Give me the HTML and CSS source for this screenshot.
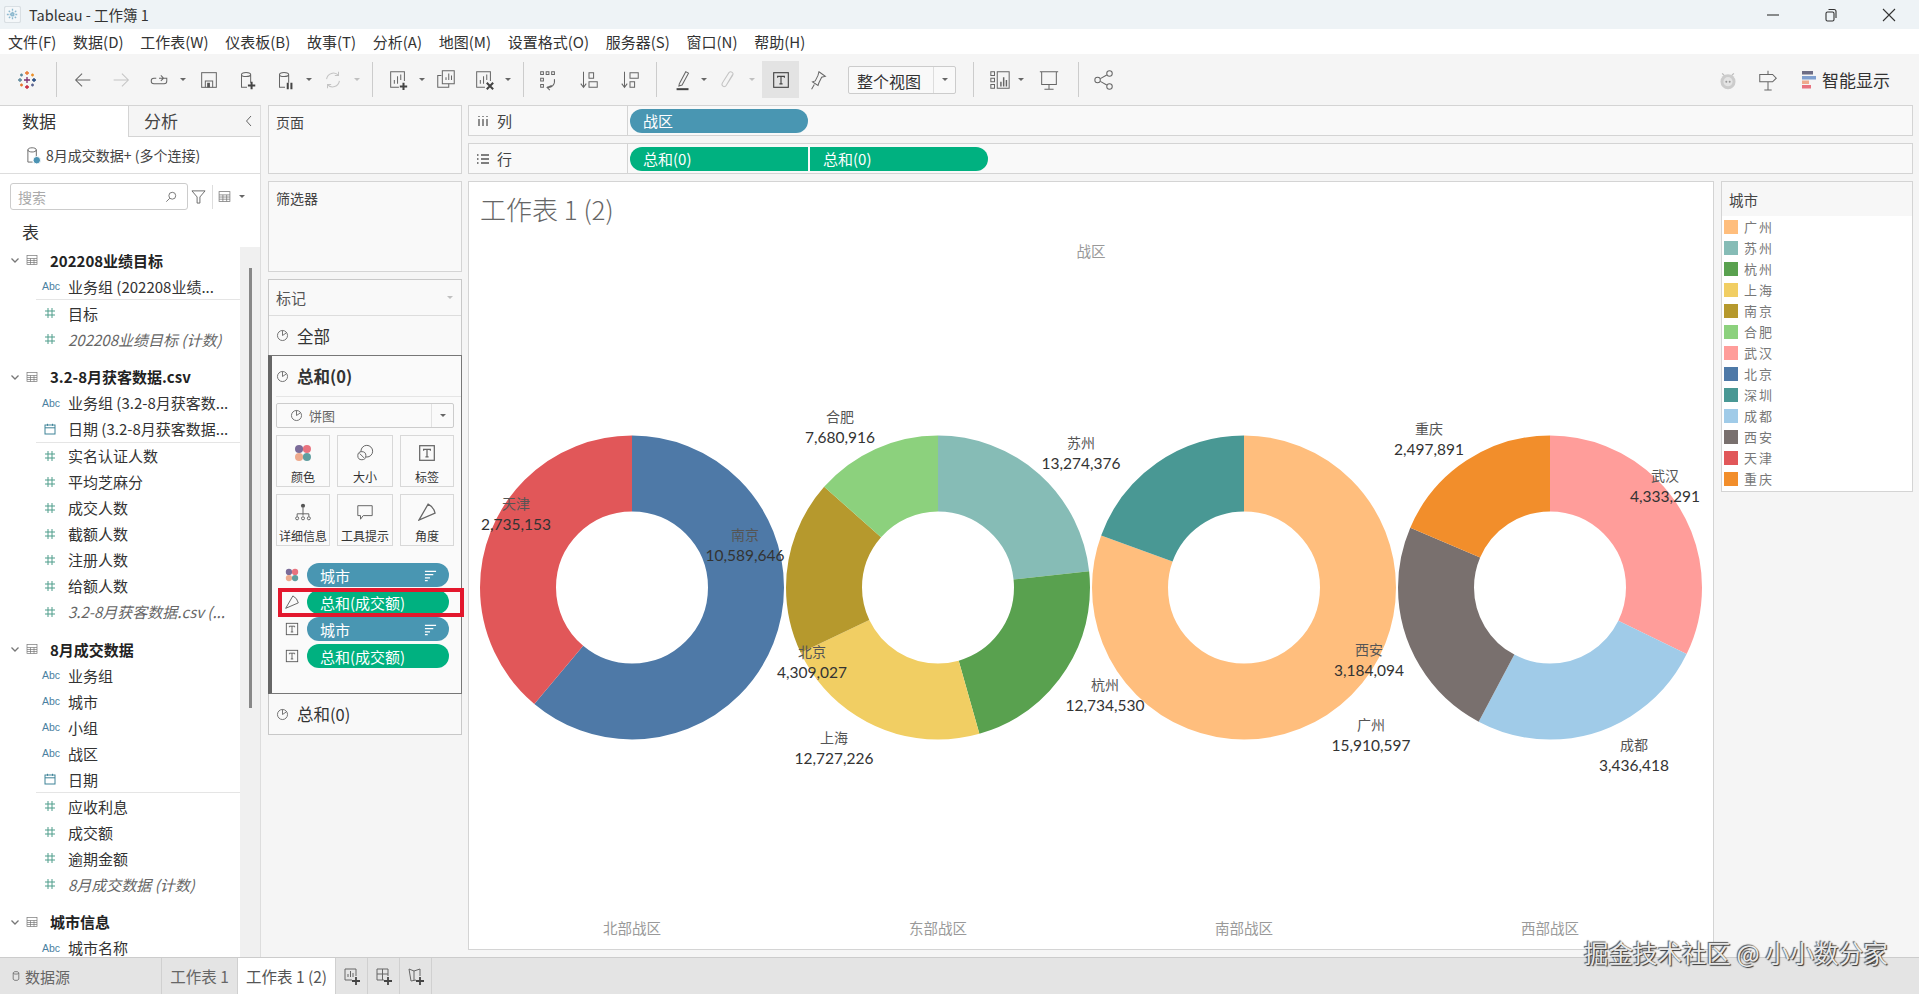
FILE: index.html
```html
<!DOCTYPE html>
<html lang="zh-CN">
<head>
    <meta charset="UTF-8">
    <title>Tableau - 工作簿 1</title>
    <link rel="stylesheet" href="styles.css">
</head>
<body>
    <svg class="sprites" width="0" height="0">
        <symbol id="pie" viewBox="0 0 16 16"><circle cx="8" cy="8" r="6.2"/><path d="M8 8V1.8M8 8l5-3.4"/></symbol>
        <symbol id="tbox" viewBox="0 0 16 16"><rect x="1.5" y="1.5" width="13" height="13"/><path d="M5 6V4.8h6V6M8 4.8v6.6M6.6 11.4h2.8"/></symbol>
        <symbol id="dots" viewBox="0 0 16 16"><circle class="d1" cx="4.5" cy="4.5" r="3.6"/><circle class="d2" cx="11.5" cy="4.5" r="3.6"/><circle class="d3" cx="4.5" cy="11.5" r="3.6"/><circle class="d4" cx="11.5" cy="11.5" r="3.6"/></symbol>
        <symbol id="angle" viewBox="0 0 16 16"><path d="M.8 15.2L9 1q5 2.500 6.200 8z"/></symbol>
        <symbol id="sort" viewBox="0 0 14 14"><path d="M1 2.5h12M1 6h9M1 9.5h5.5M1 12.5h3"/></symbol>
        <symbol id="table" viewBox="0 0 12 12"><rect x="1" y="1.5" width="10" height="9"/><path d="M1 4.5h10M1 6.5h10M1 8.5h10M4.5 4.5v6M8 4.5v6"/></symbol>
        <symbol id="chev" viewBox="0 0 10 10"><path d="M1.5 3.5L5 7l3.5-3.5"/></symbol>
        <symbol id="hash" viewBox="0 0 12 12"><path d="M4 1v10M8 1v10M1 4h10M1 8h10"/></symbol>
        <symbol id="date" viewBox="0 0 12 12"><rect x="1" y="2" width="10" height="9"/><path d="M1 4.8h10M3.5 .8v2M8.5 .8v2"/></symbol>
        <symbol id="can" viewBox="0 0 24 24"><path d="M6 6c0-3 10-3 10 0v9M6 6c0 3 10 3 10 0M6 6v14h6"/></symbol>
    </svg>

    <div class="app">
        <div class="titlebar">
            <svg class="app-icon" viewBox="0 0 18 18"><rect x="0.5" y="0.5" width="17" height="17" rx="2" fill="#f4f7f9" stroke="#d9dfe3"/><path d="M9 3v12M3 9h12M5 5l8 8M13 5l-8 8" stroke="#8db9cf" stroke-width="1.4" stroke-dasharray="2 1"/></svg>
            <span class="app-name">Tableau - 工作簿 1</span>
            <div class="win-buttons">
                <span class="win-btn"><svg viewBox="0 0 14 14"><path d="M1 7h12"/></svg></span>
                <span class="win-btn"><svg viewBox="0 0 14 14"><rect x="2" y="4" width="8" height="9" rx="1.5"/><path d="M4.5 1.5H10a2 2 0 0 1 2 2V10"/></svg></span>
                <span class="win-btn"><svg viewBox="0 0 14 14"><path d="M1 1l12 12M13 1L1 13"/></svg></span>
            </div>
        </div>

        <div class="menubar">
            <span>文件(F)</span><span>数据(D)</span><span>工作表(W)</span><span>仪表板(B)</span><span>故事(T)</span><span>分析(A)</span><span>地图(M)</span><span>设置格式(O)</span><span>服务器(S)</span><span>窗口(N)</span><span>帮助(H)</span>
        </div>

        <div class="toolbar">
            <div class="tool-group logo-group">
                <svg class="logo" viewBox="0 0 20 20" fill="none" stroke-width="1.4">
                    <path d="M10 1v4M8 3h4" stroke="#e8762c"/><path d="M10 15v4M8 17h4" stroke="#c72037"/>
                    <path d="M1 10h4M3 8v4" stroke="#5b879b"/><path d="M15 10h4M17 8v4" stroke="#1f447b"/>
                    <path d="M10 7v6M7 10h6" stroke="#7a2e6e"/>
                    <path d="M4.5 3.5v3M3 5h3" stroke="#59879b"/><path d="M15.5 3.5v3M14 5h3" stroke="#eb912b"/>
                    <path d="M4.5 13.5v3M3 15h3" stroke="#e8762c"/><path d="M15.5 13.5v3M14 15h3" stroke="#5b6591"/>
                </svg>
            </div>
            <div class="tool-group group-file">
                <span class="tool"><svg viewBox="0 0 24 24"><path d="M20 12H5M11 5l-7 7 7 7"/></svg></span>
                <span class="tool off"><svg viewBox="0 0 24 24"><path d="M4 12h15M13 5l7 7-7 7"/></svg></span>
                <span class="tool"><svg viewBox="0 0 24 24"><path d="M9 10H6.500a3 3 0 0 0 0 6h11a3 3 0 0 0 3-3v-3H12M14 7l3 3-3 3"/></svg></span>
                <span class="caret"></span>
                <span class="tool push"><svg viewBox="0 0 24 24"><rect x="4" y="4" width="16" height="16"/><path d="M8 20v-7h8v7"/><rect class="solid" x="10" y="15" width="3" height="5"/></svg></span>
                <span class="tool"><svg viewBox="0 0 24 24"><use href="#can"/><path class="thick" d="M13 18h8M17 14v8"/></svg></span>
                <span class="tool"><svg viewBox="0 0 24 24"><use href="#can"/><path class="thick" d="M15 15v7M19 15v7"/></svg></span>
                <span class="caret"></span>
                <span class="tool off"><svg viewBox="0 0 24 24"><path d="M5 11a7.500 7.500 0 0 1 13-4M19 13a7.500 7.500 0 0 1-13 4M18 3v4h-4M6 21v-4h4"/></svg></span>
                <span class="caret off"></span>
            </div>
            <div class="tool-group group-sheet">
                <span class="tool"><svg viewBox="0 0 24 24"><path d="M13 20H4V3h15v10M8 16v-4M11.500 16V8M15 12V6"/><path class="thick" d="M14 19h8M18 15v8"/></svg></span>
                <span class="caret"></span>
                <span class="tool"><svg viewBox="0 0 24 24"><path d="M7 7H3v13h12v-4"/><path d="M8 2h13v14H8zM12 12V9M15 12V5M18 12V7"/></svg></span>
                <span class="tool"><svg viewBox="0 0 24 24"><path d="M13 20H4V3h15v10M8 16v-4M11.500 16V8M15 12V6"/><path class="thick" d="M15 15l7 7M22 15l-7 7"/></svg></span>
                <span class="caret"></span>
            </div>
            <div class="tool-group group-sort">
                <span class="tool"><svg viewBox="0 0 24 24"><path d="M4 3h3v3H4zM10 3h3v3h-3zM16 3h3v3h-3zM4 10h3v3H4zM4 17h3v3H4zM11 20c5 1 9-3 8-9M16 18l-5 2 3 3"/></svg></span>
                <span class="tool"><svg viewBox="0 0 24 24"><path d="M6 3v16M3 16l3 4 3-4M12 4h5v6h-5zM12 14h9v6h-9z"/></svg></span>
                <span class="tool"><svg viewBox="0 0 24 24"><path d="M6 3v16M3 16l3 4 3-4M12 4h9v6h-9zM12 14h5v6h-5z"/></svg></span>
            </div>
            <div class="tool-group group-mark">
                <span class="tool"><svg viewBox="0 0 24 24"><path d="M8 16l7-13 3 1.500-7 13-3.500 1z"/><path class="thick" d="M5 22h13"/></svg></span>
                <span class="caret tuck"></span>
                <span class="tool off"><svg viewBox="0 0 24 24"><path d="M17 6l-7 12c-2 3-6 0-4-3l7-11c2-2 6 0 4 3l-7 11"/></svg></span>
                <span class="caret off"></span>
                <span class="tool selected"><svg class="t-icon" viewBox="0 0 16 16"><use href="#tbox"/></svg></span>
                <span class="tool"><svg viewBox="0 0 24 24"><path d="M13 3l7 5-4 1-3 6-1 3-6-4 3-1 3-6zM8 17l-3 5"/></svg></span>
                <div class="fit-select"><span class="fit-label">整个视图</span><span class="fit-arrow"><i class="caret"></i></span></div>
            </div>
            <div class="tool-group group-show">
                <span class="tool"><svg viewBox="0 0 24 24"><path d="M2 3h4v4H2zM2 10h4v4H2zM2 17h4v4H2zM9 3h13v18H9z"/><path class="bars" d="M13 19v-5M16 19V9M19 19v-7"/></svg></span>
                <span class="caret tuck"></span>
                <span class="tool present"><svg viewBox="0 0 24 24"><path d="M2 3h20M4 3v14h16V3M12 17v5M7 22h10"/></svg></span>
            </div>
            <div class="tool-group group-share">
                <span class="tool"><svg viewBox="0 0 24 24"><circle cx="5" cy="12" r="3"/><circle cx="18" cy="5" r="3"/><circle cx="18" cy="19" r="3"/><path d="M8 10.500l7-4M8 13.500l7 4"/></svg></span>
            </div>
            <div class="toolbar-right">
                <svg class="bot" viewBox="0 0 24 24"><path d="M5 4l3 3M19 4l-3 3" stroke="#bbb" fill="none" stroke-width="1.500"/><circle cx="12" cy="14" r="9" fill="#ccc"/><circle cx="12" cy="14" r="5.500" fill="#e4e4e4"/><circle cx="10" cy="14" r="1.200" fill="#999"/><circle cx="14" cy="14" r="1.200" fill="#999"/></svg>
                <svg class="sign" viewBox="0 0 24 24"><path d="M12 2v4M3 6h14l4 4-4 4H3zM12 14v9M8 23h8"/></svg>
                <div class="show-me">
                    <svg viewBox="0 0 14 18"><rect width="11" height="3.500" fill="#6d6d85"/><rect y="5" width="14" height="3.500" fill="#7f9fcf"/><rect y="9.500" width="7" height="3.500" fill="#eeaa8d"/><rect y="14" width="9" height="3.500" fill="#e8737f"/></svg>
                    <span>智能显示</span>
                </div>
            </div>
        </div>

        <div class="workspace">
            <aside class="data-pane">
                <div class="pane-tabs">
                    <span class="pane-tab active">数据</span>
                    <span class="pane-tab">分析<svg class="collapse" viewBox="0 0 10 14"><path d="M7 2L2.500 7 7 12"/></svg></span>
                </div>
                <div class="source-row">
                    <svg viewBox="0 0 16 20"><path d="M2 4c0-3 9-3 9 0v8M2 4c0 3 9 3 9 0M2 4v13h5"/><circle class="badge" cx="11.500" cy="15" r="4"/></svg>
                    <span>8月成交数据+ (多个连接)</span>
                </div>
                <div class="search-row">
                    <div class="search-box"><span>搜索</span><svg viewBox="0 0 14 14"><circle cx="8.500" cy="5.500" r="4"/><path d="M5.500 8.500L1.500 12.500"/></svg></div>
                    <svg class="funnel" viewBox="0 0 16 16"><path d="M1 2h14L9.500 8.500V15h-3V8.500z"/></svg>
                    <span class="search-sep"></span>
                    <svg class="view-list" viewBox="0 0 12 12"><use href="#table"/></svg>
                    <span class="caret"></span>
                </div>
                <div class="tables-title">表</div>
                <div class="tree-wrap">
                    <div class="tree">
                        <div class="tree-head"><svg class="chev"><use href="#chev"/></svg><svg class="tbl"><use href="#table"/></svg>202208业绩目标</div>
                        <div class="field"><b class="abc">Abc</b>业务组 (202208业绩...</div>
                        <div class="field-sep"></div>
                        <div class="field"><svg class="hash"><use href="#hash"/></svg>目标</div>
                        <div class="field calc"><svg class="hash"><use href="#hash"/></svg>202208业绩目标 (计数)</div>

                        <div class="tree-head"><svg class="chev"><use href="#chev"/></svg><svg class="tbl"><use href="#table"/></svg>3.2-8月获客数据.csv</div>
                        <div class="field"><b class="abc">Abc</b>业务组 (3.2-8月获客数...</div>
                        <div class="field"><svg class="cal"><use href="#date"/></svg>日期 (3.2-8月获客数据...</div>
                        <div class="field-sep"></div>
                        <div class="field"><svg class="hash"><use href="#hash"/></svg>实名认证人数</div>
                        <div class="field"><svg class="hash"><use href="#hash"/></svg>平均芝麻分</div>
                        <div class="field"><svg class="hash"><use href="#hash"/></svg>成交人数</div>
                        <div class="field"><svg class="hash"><use href="#hash"/></svg>截额人数</div>
                        <div class="field"><svg class="hash"><use href="#hash"/></svg>注册人数</div>
                        <div class="field"><svg class="hash"><use href="#hash"/></svg>给额人数</div>
                        <div class="field calc"><svg class="hash"><use href="#hash"/></svg>3.2-8月获客数据.csv (...</div>

                        <div class="tree-head"><svg class="chev"><use href="#chev"/></svg><svg class="tbl"><use href="#table"/></svg>8月成交数据</div>
                        <div class="field"><b class="abc">Abc</b>业务组</div>
                        <div class="field"><b class="abc">Abc</b>城市</div>
                        <div class="field"><b class="abc">Abc</b>小组</div>
                        <div class="field"><b class="abc">Abc</b>战区</div>
                        <div class="field"><svg class="cal"><use href="#date"/></svg>日期</div>
                        <div class="field-sep"></div>
                        <div class="field"><svg class="hash"><use href="#hash"/></svg>应收利息</div>
                        <div class="field"><svg class="hash"><use href="#hash"/></svg>成交额</div>
                        <div class="field"><svg class="hash"><use href="#hash"/></svg>逾期金额</div>
                        <div class="field calc"><svg class="hash"><use href="#hash"/></svg>8月成交数据 (计数)</div>

                        <div class="tree-head"><svg class="chev"><use href="#chev"/></svg><svg class="tbl"><use href="#table"/></svg>城市信息</div>
                        <div class="field"><b class="abc">Abc</b>城市名称</div>
                    </div>
                    <div class="scroll-track"><div class="scroll-thumb"></div></div>
                </div>
            </aside>

            <div class="side-cards">
                <section class="card pages-card">页面</section>
                <section class="card filters-card">筛选器</section>
                <section class="marks-card">
                    <div class="marks-head">标记<span class="caret off"></span></div>
                    <div class="marks-row"><svg class="pie"><use href="#pie"/></svg>全部</div>
                    <div class="marks-active">
                        <div class="marks-row strong"><svg class="pie"><use href="#pie"/></svg>总和(0)</div>
                        <div class="mark-type">
                            <svg class="pie"><use href="#pie"/></svg><span>饼图</span><i class="type-arrow"><b class="caret"></b></i>
                        </div>
                        <div class="mark-buttons">
                            <div class="mark-btn"><svg><use href="#dots"/></svg>颜色</div>
                            <div class="mark-btn"><svg viewBox="0 0 20 20"><circle cx="12" cy="8" r="6.500"/><circle class="fill-white" cx="6.500" cy="13" r="4.500"/><path d="M4 10.500l5 5"/></svg>大小</div>
                            <div class="mark-btn"><svg viewBox="0 0 16 16"><use href="#tbox"/></svg>标签</div>
                            <div class="mark-btn"><svg viewBox="0 0 20 20"><circle class="solid" cx="10" cy="3" r="2.300"/><circle cx="3.500" cy="17" r="1.700"/><circle cx="10" cy="17" r="1.700"/><circle cx="16.500" cy="17" r="1.700"/><path d="M10 5v9M3.500 15v-3h13v3"/></svg>详细信息</div>
                            <div class="mark-btn"><svg viewBox="0 0 20 20"><path d="M2 3h16v11H8l-3 4v-4H2z"/></svg>工具提示</div>
                            <div class="mark-btn"><svg viewBox="0 0 16 16"><use href="#angle"/></svg>角度</div>
                        </div>
                        <div class="encodings">
                            <div class="encoding"><svg class="enc-icon"><use href="#dots"/></svg><div class="pill dim">城市<svg class="sort"><use href="#sort"/></svg></div></div>
                            <div class="encoding">
                                <svg class="enc-icon"><use href="#angle"/></svg><div class="pill measure">总和(成交额)</div>
                                <div class="red-box"></div>
                            </div>
                            <div class="encoding"><svg class="enc-icon"><use href="#tbox"/></svg><div class="pill dim">城市<svg class="sort"><use href="#sort"/></svg></div></div>
                            <div class="encoding"><svg class="enc-icon"><use href="#tbox"/></svg><div class="pill measure">总和(成交额)</div></div>
                        </div>
                    </div>
                    <div class="marks-row last"><svg class="pie"><use href="#pie"/></svg>总和(0)</div>
                </section>
            </div>

            <div class="sheet-area">
                <div class="shelf">
                    <div class="shelf-label"><svg viewBox="0 0 12 12"><path d="M2 4v7M6 4v7M10 4v7M2 1v1M6 1v1M10 1v1"/></svg>列</div>
                    <div class="shelf-pills"><div class="shelf-pill dim round-right">战区</div></div>
                </div>
                <div class="shelf">
                    <div class="shelf-label"><svg viewBox="0 0 12 12"><path d="M4 2h8M4 6h8M4 10h8M0 2h1.500M0 6h1.500M0 10h1.500"/></svg>行</div>
                    <div class="shelf-pills">
                        <div class="shelf-pill measure round-left">总和(0)</div>
                        <div class="shelf-pill measure round-right">总和(0)</div>
                    </div>
                </div>
                <div class="view-row">
                    <div class="view">
                        <h2 class="view-title">工作表 1 (2)</h2>
                        <svg class="chart" viewBox="469 182 1244 767">
                            <text class="axis" x="1091" y="252">战区</text>

                            <!-- north -->
                            <g transform="translate(632 587.500) rotate(-90)">
                                <circle class="slice" r="114" pathLength="360" stroke="#4e79a7" stroke-dasharray="220 360"/>
                                <circle class="slice" r="114" pathLength="360" stroke="#e15759" stroke-dasharray="140 360" stroke-dashoffset="-220"/>
                            </g>
                            <!-- east -->
                            <g transform="translate(938 587.500) rotate(-90)">
                                <circle class="slice" r="114" pathLength="360" stroke="#86bcb6" stroke-dasharray="83.800 360"/>
                                <circle class="slice" r="114" pathLength="360" stroke="#59a14f" stroke-dasharray="80.400 360" stroke-dashoffset="-83.800"/>
                                <circle class="slice" r="114" pathLength="360" stroke="#f1ce63" stroke-dasharray="80.400 360" stroke-dashoffset="-164.200"/>
                                <circle class="slice" r="114" pathLength="360" stroke="#b6992d" stroke-dasharray="66.900 360" stroke-dashoffset="-244.600"/>
                                <circle class="slice" r="114" pathLength="360" stroke="#8cd17d" stroke-dasharray="48.500 360" stroke-dashoffset="-311.500"/>
                            </g>
                            <!-- south -->
                            <g transform="translate(1244 587.500) rotate(-90)">
                                <circle class="slice" r="114" pathLength="360" stroke="#ffbe7d" stroke-dasharray="290 360"/>
                                <circle class="slice" r="114" pathLength="360" stroke="#499894" stroke-dasharray="70 360" stroke-dashoffset="-290"/>
                            </g>
                            <!-- west -->
                            <g transform="translate(1550 587.500) rotate(-90)">
                                <circle class="slice" r="114" pathLength="360" stroke="#ff9d9a" stroke-dasharray="116 360"/>
                                <circle class="slice" r="114" pathLength="360" stroke="#a0cbe8" stroke-dasharray="92 360" stroke-dashoffset="-116"/>
                                <circle class="slice" r="114" pathLength="360" stroke="#79706e" stroke-dasharray="85.200 360" stroke-dashoffset="-208"/>
                                <circle class="slice" r="114" pathLength="360" stroke="#f28e2b" stroke-dasharray="66.800 360" stroke-dashoffset="-293.200"/>
                            </g>

                            <text class="name" x="516" y="504">天津</text><text class="value" x="516" y="525">2,735,153</text>
                            <text class="name" x="745" y="535">南京</text><text class="value" x="745" y="556">10,589,646</text>
                            <text class="name" x="840" y="417">合肥</text><text class="value" x="840" y="438">7,680,916</text>
                            <text class="name" x="1081" y="443">苏州</text><text class="value" x="1081" y="464">13,274,376</text>
                            <text class="name" x="812" y="652">北京</text><text class="value" x="812" y="673">4,309,027</text>
                            <text class="name" x="834" y="738">上海</text><text class="value" x="834" y="759">12,727,226</text>
                            <text class="name" x="1105" y="685">杭州</text><text class="value" x="1105" y="706">12,734,530</text>
                            <text class="name" x="1369" y="650">西安</text><text class="value" x="1369" y="671">3,184,094</text>
                            <text class="name" x="1371" y="725">广州</text><text class="value" x="1371" y="746">15,910,597</text>
                            <text class="name" x="1429" y="429">重庆</text><text class="value" x="1429" y="450">2,497,891</text>
                            <text class="name" x="1665" y="476">武汉</text><text class="value" x="1665" y="497">4,333,291</text>
                            <text class="name" x="1634" y="745">成都</text><text class="value" x="1634" y="766">3,436,418</text>

                            <text class="axis" x="632" y="929">北部战区</text>
                            <text class="axis" x="938" y="929">东部战区</text>
                            <text class="axis" x="1244" y="929">南部战区</text>
                            <text class="axis" x="1550" y="929">西部战区</text>
                        </svg>
                    </div>
                    <aside class="legend">
                        <div class="legend-title">城市</div>
                        <div class="legend-list">
                            <div class="legend-item"><i class="c-guangzhou"></i>广州</div>
                            <div class="legend-item"><i class="c-suzhou"></i>苏州</div>
                            <div class="legend-item"><i class="c-hangzhou"></i>杭州</div>
                            <div class="legend-item"><i class="c-shanghai"></i>上海</div>
                            <div class="legend-item"><i class="c-nanjing"></i>南京</div>
                            <div class="legend-item"><i class="c-hefei"></i>合肥</div>
                            <div class="legend-item"><i class="c-wuhan"></i>武汉</div>
                            <div class="legend-item"><i class="c-beijing"></i>北京</div>
                            <div class="legend-item"><i class="c-shenzhen"></i>深圳</div>
                            <div class="legend-item"><i class="c-chengdu"></i>成都</div>
                            <div class="legend-item"><i class="c-xian"></i>西安</div>
                            <div class="legend-item"><i class="c-tianjin"></i>天津</div>
                            <div class="legend-item"><i class="c-chongqing"></i>重庆</div>
                        </div>
                    </aside>
                </div>
            </div>
        </div>

        <div class="tabbar">
            <div class="tab source-tab"><svg viewBox="0 0 10 14"><path d="M1.500 3c0-2 7-2 7 0v8c0 2-7 2-7 0zM1.500 3.500c0 1.500 7 1.500 7 0"/></svg>数据源</div>
            <div class="tab sheet-tab">工作表 1</div>
            <div class="tab sheet-tab current">工作表 1 (2)</div>
            <div class="tab add-tab"><svg viewBox="0 0 18 18"><path d="M9 13H2V2h11v7M5 10V7M7.500 10V4M10 10V6"/><path class="thick" d="M9 14h8M13 10v8"/></svg></div>
            <div class="tab add-tab"><svg viewBox="0 0 18 18"><path d="M9 13H2V2h11v7M2 7h11M7.500 2v11"/><path class="thick" d="M9 14h8M13 10v8"/></svg></div>
            <div class="tab add-tab"><svg viewBox="0 0 18 18"><path d="M9 13l-5 1-2-12 5 2 6-2v7M7 4v9"/><path class="thick" d="M9 14h8M13 10v8"/></svg></div>
        </div>

        <div class="watermark">掘金技术社区 @ 小小数分家</div>
    </div>
</body>
</html>
```

FILE: styles.css
```css
* {
    box-sizing: border-box;
}

html, body {
    margin: 0;
    padding: 0;
    height: 100%;
    overflow: hidden;
}

body {
    font-family: "Noto Sans CJK SC", "Noto Sans", sans-serif;
    font-size: 15px;
    color: #333;
    background-color: #f5f5f5;
}

.sprites {
    position: absolute;
}

svg {
    fill: none;
    stroke: #666;
    stroke-width: 1.3;
}

.app {
    position: relative;
    display: flex;
    flex-direction: column;
    height: 100vh;
}

/* window chrome */
.titlebar {
    display: flex;
    align-items: center;
    height: 29px;
    flex: none;
    padding-left: 4px;
    background-color: #eef3f6;
}

.app-icon {
    width: 17px;
    height: 17px;
    stroke: none;
}

.app-name {
    margin-left: 8px;
    font-size: 14.500px;
    color: #333;
    line-height: 20px;
}

.win-buttons {
    display: flex;
    margin-left: auto;
    margin-right: 1px;
}

.win-btn {
    display: flex;
    justify-content: center;
    align-items: center;
    width: 58px;
    height: 29px;
}

.win-btn svg {
    width: 14px;
    height: 14px;
    stroke: #333;
    stroke-width: 1.1;
}

.menubar {
    display: flex;
    gap: 16.700px;
    align-items: center;
    flex: none;
    height: 25px;
    padding-left: 8px;
    background-color: #fff;
    font-size: 15px;
    line-height: 20px;
    color: #333;
}

/* toolbar */
.toolbar {
    display: flex;
    align-items: center;
    flex: none;
    height: 51px;
    background-color: #f5f5f5;
}

.tool-group {
    display: flex;
    align-items: center;
    height: 35px;
    border-right: 1px solid #ccc;
}

.logo-group {
    width: 57px;
    padding-left: 17px;
}

.logo {
    width: 20px;
    height: 20px;
}

.group-file {
    padding: 0 10px 0 7px;
}

.group-sheet {
    padding: 0 10px 0 6px;
}

.group-sort {
    gap: 3px;
    padding: 0 7px 0 5px;
}

.group-mark {
    padding: 0 17px 0 7px;
}

.group-show {
    padding: 0 10px 0 7px;
}

.group-share {
    padding-left: 6px;
    border-right: 0;
}

.tool {
    display: flex;
    justify-content: center;
    align-items: center;
    flex: none;
    width: 38px;
    height: 37px;
}

.tool svg {
    width: 22px;
    height: 22px;
    stroke-width: 1.1;
}

.tool.off svg {
    stroke: #c4c4c4;
}

.tool.push {
    margin-left: 2px;
}

.tool.present {
    margin-left: 4px;
}

.tool.selected {
    width: 37px;
    margin-left: 5px;
    background-color: #e3e3e3;
}

.tool svg.t-icon {
    width: 18px;
    height: 18px;
    stroke: #444;
    stroke-width: 1;
}

.thick {
    stroke: #444;
    stroke-width: 2.2;
}

.bars {
    stroke: #666;
    stroke-width: 1.6;
}

.solid {
    fill: #555;
    stroke: none;
}

.caret {
    display: inline-block;
    flex: none;
    width: 0;
    height: 0;
    margin: 0 2px;
    border-top: 3.500px solid #666;
    border-left: 3px solid transparent;
    border-right: 3px solid transparent;
}

.caret.off {
    border-top-color: #c0c0c0;
}

.caret.tuck {
    margin-left: -1px;
}

.fit-select {
    display: flex;
    width: 108px;
    height: 28px;
    margin-left: 11px;
    background-color: #f9f9f9;
    border: 1px solid #ccc;
    border-radius: 2px;
}

.fit-label {
    flex: 1;
    padding-left: 8px;
    font-size: 16px;
    line-height: 28px;
    color: #333;
}

.fit-arrow {
    display: flex;
    justify-content: center;
    align-items: center;
    width: 22px;
    border-left: 1px solid #ddd;
}

.toolbar-right {
    display: flex;
    align-items: center;
    margin-left: auto;
    padding-right: 29px;
}

.bot {
    width: 20px;
    height: 22px;
    stroke: none;
}

.sign {
    width: 22px;
    height: 24px;
    margin-left: 19px;
    stroke-width: 1.1;
}

.show-me {
    display: flex;
    align-items: center;
    gap: 6px;
    margin-left: 23px;
    font-size: 17px;
    color: #333;
}

.show-me svg {
    width: 14px;
    height: 18px;
    stroke: none;
}

/* main area */
.workspace {
    display: flex;
    flex: 1;
    min-height: 0;
}

.data-pane {
    display: flex;
    flex-direction: column;
    flex: none;
    width: 261px;
    background-color: #fff;
    border-top: 1px solid #d4d4d4;
    border-right: 1px solid #ddd;
}

.pane-tabs {
    display: flex;
    flex: none;
    height: 31px;
    font-size: 17px;
    line-height: 30px;
}

.pane-tab {
    position: relative;
    flex: 1;
    padding-left: 15px;
    color: #444;
    background-color: #f5f5f5;
    border-bottom: 1px solid #d4d4d4;
}

.pane-tab.active {
    flex: none;
    width: 129px;
    padding-left: 22px;
    color: #333;
    background-color: #fff;
    border-bottom: 0;
    border-right: 1px solid #d4d4d4;
}

.collapse {
    position: absolute;
    top: 8px;
    right: 6px;
    width: 10px;
    height: 14px;
    stroke-width: 1;
}

.source-row {
    display: flex;
    align-items: center;
    flex: none;
    gap: 5px;
    height: 37px;
    padding-left: 26px;
    font-size: 14px;
    color: #444;
    border-bottom: 1px solid #ddd;
}

.source-row svg {
    width: 15px;
    height: 19px;
    stroke-width: 1;
}

.badge {
    fill: #4b93b3;
    stroke: #fff;
}

.search-row {
    display: flex;
    align-items: center;
    flex: none;
    height: 27px;
    margin-top: 9px;
    padding-left: 10px;
}

.search-box {
    display: flex;
    justify-content: space-between;
    align-items: center;
    width: 178px;
    height: 27px;
    padding: 0 10px 0 7px;
    font-size: 14px;
    color: #aaa;
    background-color: #fff;
    border: 1px solid #ccc;
    border-radius: 3px;
}

.search-box svg {
    width: 12px;
    height: 12px;
    stroke-width: 1;
}

.funnel {
    width: 15px;
    height: 15px;
    margin-left: 3px;
    stroke-width: 1;
}

.search-sep {
    width: 1px;
    height: 24px;
    margin-left: 6px;
    background-color: #ddd;
}

.view-list {
    width: 13px;
    height: 13px;
    margin: 0 6px 0 5px;
    stroke: #777;
    stroke-width: 0.7;
}

.tables-title {
    flex: none;
    height: 37px;
    padding-left: 22px;
    font-size: 17px;
    line-height: 44px;
    color: #333;
}

.tree-wrap {
    display: flex;
    flex: 1;
    min-height: 0;
}

.tree {
    flex: 1;
    overflow: hidden;
}

.tree-head {
    display: flex;
    align-items: center;
    height: 26px;
    margin-top: 11.500px;
    font-weight: 700;
    color: #222;
}

.tree-head:first-child {
    margin-top: 0;
}

.chev {
    width: 10px;
    height: 10px;
    margin-left: 10px;
    stroke: #777;
}

.tbl {
    width: 12px;
    height: 12px;
    margin: 0 12px 0 6px;
    stroke: #777;
    stroke-width: 0.7;
}

.field {
    display: flex;
    align-items: center;
    height: 26px;
    padding-left: 42px;
    white-space: nowrap;
}

.field.calc {
    font-style: italic;
    color: #666;
}

.abc {
    width: 26px;
    font-family: "Liberation Sans", sans-serif;
    font-size: 10.500px;
    font-weight: 400;
    font-style: normal;
    color: #4a7f9f;
}

.hash,
.cal {
    flex: none;
    width: 12px;
    height: 12px;
    margin: 0 12px 0 2px;
}

.hash {
    stroke: #4e9d8b;
    stroke-width: 1;
}

.cal {
    stroke: #3f8398;
    stroke-width: 1;
}

.field-sep {
    height: 1px;
    margin-left: 36px;
    background-color: #e5e5e5;
}

.scroll-track {
    flex: none;
    width: 20px;
    padding: 21px 0 0 9px;
    background-color: #f0f0f0;
}

.scroll-thumb {
    width: 3px;
    height: 440px;
    background-color: #888;
}

/* pages, filters, marks */
.side-cards {
    display: flex;
    flex-direction: column;
    flex: none;
    width: 194px;
    margin-left: 7px;
}

.card {
    flex: none;
    padding: 6px 7px;
    font-size: 14px;
    color: #444;
    background-color: #f9f9f9;
    border: 1px solid #d4d4d4;
}

.pages-card {
    height: 69px;
}

.filters-card {
    height: 91px;
    margin-top: 7px;
}

.marks-card {
    flex: none;
    height: 456px;
    margin-top: 7px;
    background-color: #f9f9f9;
    border: 1px solid #c8c8c8;
}

.marks-head {
    display: flex;
    justify-content: space-between;
    align-items: center;
    height: 36px;
    padding: 0 6px 0 7px;
    font-size: 15px;
    color: #555;
    border-bottom: 1px solid #ddd;
}

.marks-row {
    display: flex;
    align-items: center;
    height: 39px;
    padding-left: 7px;
    font-size: 16.500px;
    color: #333;
}

.marks-row.strong {
    height: 41px;
    padding-left: 0;
    font-weight: 700;
    border-bottom: 1px solid #e5e5e5;
}

.marks-row.last {
    height: 40px;
}

.pie {
    flex: none;
    width: 13px;
    height: 13px;
    margin-right: 8px;
    stroke-width: 1.1;
}

.marks-active {
    height: 339px;
    margin: 0 -1px 0 -1px;
    padding-left: 4px;
    background-color: #fafafa;
    border: 1px solid #777;
    border-left: 4px solid #666;
}

.mark-type {
    display: flex;
    align-items: center;
    width: 178px;
    height: 25px;
    margin-top: 6px;
    padding-left: 13px;
    font-size: 13px;
    color: #666;
    background-color: #fafafa;
    border: 1px solid #ccc;
    border-radius: 2px;
}

.mark-type .pie {
    margin-right: 6px;
}

.type-arrow {
    display: flex;
    justify-content: center;
    align-items: center;
    width: 22px;
    height: 100%;
    margin-left: auto;
    border-left: 1px solid #e2e2e2;
}

.mark-buttons {
    display: grid;
    grid-template-columns: 54px 56px 54px;
    grid-auto-rows: 52px;
    gap: 7px;
    margin-top: 7px;
}

.mark-btn {
    display: flex;
    flex-direction: column;
    align-items: center;
    padding-top: 8px;
    font-size: 12px;
    line-height: 16px;
    color: #333;
    white-space: nowrap;
    border: 1px solid #d8d8d8;
}

.mark-btn svg {
    flex: none;
    width: 18px;
    height: 18px;
    margin-bottom: 7px;
    stroke-width: 1.1;
}

.fill-white {
    fill: #fafafa;
}

.d1 { fill: #7b6b98; stroke: none; }
.d2 { fill: #e8737f; stroke: none; }
.d3 { fill: #eeaa8d; stroke: none; }
.d4 { fill: #5f9ea0; stroke: none; }

.encodings {
    display: flex;
    flex-direction: column;
    gap: 3px;
    margin-top: 17px;
}

.encoding {
    position: relative;
    display: flex;
    align-items: center;
    height: 24px;
    padding-left: 9px;
}

.enc-icon {
    flex: none;
    width: 14px;
    height: 14px;
    margin-right: 8px;
    stroke: #555;
    stroke-width: 1;
}

.pill {
    display: flex;
    justify-content: space-between;
    align-items: center;
    width: 142px;
    height: 24px;
    padding: 0 12px 0 13px;
    font-size: 15px;
    color: #fff;
    border-radius: 12px;
}

.sort {
    width: 13px;
    height: 13px;
    stroke: #fff;
}

.dim {
    background-color: #4996b2;
}

.measure {
    background-color: #00b180;
}

.red-box {
    position: absolute;
    top: -2px;
    left: 2px;
    width: 186px;
    height: 29px;
    border: 4px solid #e3172d;
}

/* shelves and view */
.sheet-area {
    display: flex;
    flex-direction: column;
    flex: 1;
    min-width: 0;
    margin-left: 6px;
    padding-right: 6px;
}

.shelf {
    display: flex;
    flex: none;
    height: 31px;
    margin-bottom: 7px;
    background-color: #f9f9f9;
    border: 1px solid #d4d4d4;
}

.shelf-label {
    display: flex;
    align-items: center;
    flex: none;
    gap: 8px;
    width: 159px;
    padding-left: 8px;
    font-size: 15px;
    color: #444;
    border-right: 1px solid #d4d4d4;
}

.shelf-label svg {
    width: 12px;
    height: 12px;
    stroke: #555;
}

.shelf-pills {
    display: flex;
    gap: 2px;
    padding: 3px 0 0 2px;
}

.shelf-pill {
    width: 178px;
    height: 24px;
    padding-left: 13px;
    font-size: 15px;
    line-height: 23px;
    color: #fff;
}

.round-right {
    border-radius: 0 12px 12px 0;
}

.round-left {
    border-radius: 12px 0 0 12px;
}

.shelf-pill.dim {
    border-radius: 12px;
}

.view-row {
    display: flex;
    flex: 1;
    gap: 7px;
    min-height: 0;
    margin-bottom: 7px;
}

.view {
    position: relative;
    flex: 1;
    min-width: 0;
    background-color: #fff;
    border: 1px solid #d4d4d4;
}

.view-title {
    margin: 0;
    padding: 10px 0 0 11px;
    font-size: 26px;
    font-weight: 300;
    line-height: 34px;
    color: #666;
}

.chart {
    position: absolute;
    top: 0;
    left: 0;
    width: 1244px;
    height: 767px;
    stroke: none;
}

.slice {
    fill: none;
    stroke-width: 76;
}

.chart text {
    text-anchor: middle;
    dominant-baseline: central;
    transform: translateY(-1.500px);
}

.name {
    font-size: 14px;
    fill: #555;
}

.value {
    font-family: "Lato", sans-serif;
    font-size: 15.500px;
    fill: #333;
}

.axis {
    font-size: 14.500px;
    fill: #999;
}

.legend {
    flex: none;
    align-self: flex-start;
    width: 192px;
    height: 311px;
    background-color: #fff;
    border: 1px solid #d4d4d4;
}

.legend-title {
    height: 34px;
    padding-left: 7px;
    font-size: 14.500px;
    line-height: 36px;
    color: #444;
    background-color: #f7f7f7;
}

.legend-item {
    display: flex;
    align-items: center;
    height: 21px;
    padding-left: 2px;
    font-size: 13px;
    letter-spacing: 2px;
    color: #777;
}

.legend-item i {
    width: 14px;
    height: 14px;
    margin-right: 6px;
}

.c-guangzhou { background-color: #ffbe7d; }
.c-suzhou { background-color: #86bcb6; }
.c-hangzhou { background-color: #59a14f; }
.c-shanghai { background-color: #f1ce63; }
.c-nanjing { background-color: #b6992d; }
.c-hefei { background-color: #8cd17d; }
.c-wuhan { background-color: #ff9d9a; }
.c-beijing { background-color: #4e79a7; }
.c-shenzhen { background-color: #499894; }
.c-chengdu { background-color: #a0cbe8; }
.c-xian { background-color: #79706e; }
.c-tianjin { background-color: #e15759; }
.c-chongqing { background-color: #f28e2b; }

/* sheet tabs */
.tabbar {
    display: flex;
    flex: none;
    height: 37px;
    font-size: 15.500px;
    background-color: #e4e4e4;
    border-top: 1px solid #ccc;
}

.tab {
    display: flex;
    justify-content: center;
    align-items: center;
    color: #666;
    border-right: 1px solid #d0d0d0;
}

.source-tab {
    justify-content: flex-start;
    gap: 5px;
    width: 162px;
    padding-left: 12px;
    font-size: 15px;
}

.source-tab svg {
    width: 8px;
    height: 12px;
    stroke-width: 1;
}

.sheet-tab {
    width: 76px;
    white-space: nowrap;
}

.sheet-tab.current {
    width: 98px;
    color: #555;
    background-color: #fff;
}

.add-tab {
    width: 32px;
}

.add-tab svg {
    width: 18px;
    height: 18px;
    stroke-width: 1;
}

.add-tab .thick {
    stroke-width: 1.8;
}

.watermark {
    position: absolute;
    top: 938px;
    left: 1584px;
    font-size: 24.500px;
    line-height: 30px;
    white-space: nowrap;
    color: #e8e8e8;
    text-shadow: 1px 1px 1px #333, -1px -1px 1px #555;
}
```
